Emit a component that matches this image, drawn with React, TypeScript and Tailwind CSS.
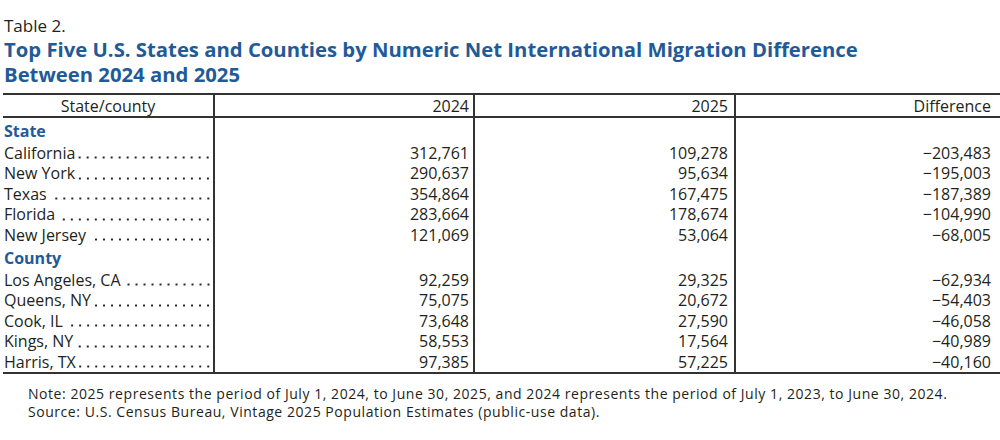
import React from "react";

type Row = { name: string; a: string; b: string; diff: string };

const states: Row[] = [
  { name: "California", a: "312,761", b: "109,278", diff: "−203,483" },
  { name: "New York", a: "290,637", b: "95,634", diff: "−195,003" },
  { name: "Texas", a: "354,864", b: "167,475", diff: "−187,389" },
  { name: "Florida", a: "283,664", b: "178,674", diff: "−104,990" },
  { name: "New Jersey", a: "121,069", b: "53,064", diff: "−68,005" },
];

const counties: Row[] = [
  { name: "Los Angeles, CA", a: "92,259", b: "29,325", diff: "−62,934" },
  { name: "Queens, NY", a: "75,075", b: "20,672", diff: "−54,403" },
  { name: "Cook, IL", a: "73,648", b: "27,590", diff: "−46,058" },
  { name: "Kings, NY", a: "58,553", b: "17,564", diff: "−40,989" },
  { name: "Harris, TX", a: "97,385", b: "57,225", diff: "−40,160" },
];

function DataRow({ row }: { row: Row }) {
  return (
    <div className="grid grid-cols-[212px_260px_261px_1fr] h-[20.5px] leading-[20.5px]">
      <div className="flex items-end pl-[1px] border-r-2 border-[#333]">
        <span className="whitespace-nowrap">{row.name}</span>
        {/* dot leader */}
        <div className="flex-1 h-[3px] mb-[4px] ml-[3px] mr-[1px] bg-[radial-gradient(circle,#231f20_0.9px,transparent_1.3px)] bg-[length:8px_3px] bg-right bg-repeat-x" />
      </div>
      <div className="text-right pr-[4px] border-r-2 border-[#333]">{row.a}</div>
      <div className="text-right pr-[6px] border-r-2 border-[#333]">{row.b}</div>
      <div className="text-right pr-[9px]">{row.diff}</div>
    </div>
  );
}

function SectionRow({ label }: { label: string }) {
  return (
    <div className="grid grid-cols-[212px_260px_261px_1fr] h-[24.5px]">
      <div className="pl-[1px] pt-[3px] leading-[20px] font-bold text-[#1f5a99] border-r-2 border-[#333]">
        {label}
      </div>
      <div className="border-r-2 border-[#333]" />
      <div className="border-r-2 border-[#333]" />
      <div />
    </div>
  );
}

export default function App() {
  return (
    <div className="w-[1000px] h-[440px] bg-white text-[#231f20] font-['Open_Sans',sans-serif] overflow-hidden">
      <div className="pt-[15px] pl-[4px]">
        <div className="text-[17px] leading-[22px]">Table 2.</div>
        <h1 className="text-[20.3px] leading-[25px] font-bold text-[#1f5a99]">
          Top Five U.S. States and Counties by Numeric Net International Migration Difference
          <br />
          Between 2024 and 2025
        </h1>
      </div>

      <div className="ml-[3px] mt-[6px] text-[16px] border-t-2 border-b-2 border-[#333]">
        {/* header */}
        <div className="grid grid-cols-[212px_260px_261px_1fr] h-[23px] leading-[23px] border-b-2 border-[#333]">
          <div className="text-center border-r-2 border-[#333]">State/county</div>
          <div className="text-right pr-[4px] border-r-2 border-[#333]">2024</div>
          <div className="text-right pr-[6px] border-r-2 border-[#333]">2025</div>
          <div className="text-right pr-[9px]">Difference</div>
        </div>

        <SectionRow label="State" />
        {states.map((r) => (
          <DataRow key={r.name} row={r} />
        ))}
        <SectionRow label="County" />
        {counties.map((r) => (
          <DataRow key={r.name} row={r} />
        ))}
      </div>

      <div className="pl-[28px] pt-[11px] text-[14px] leading-[17.5px] tracking-[0.55px]">
        <p>
          Note: 2025 represents the period of July 1, 2024, to June 30, 2025, and 2024 represents the period of July 1, 2023, to June 30, 2024.
        </p>
        <p>Source: U.S. Census Bureau, Vintage 2025 Population Estimates (public-use data).</p>
      </div>
    </div>
  );
}
